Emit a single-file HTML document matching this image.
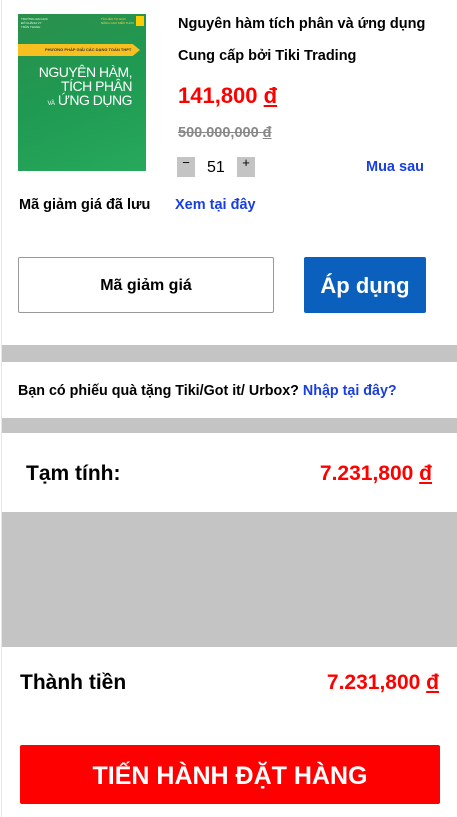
<!DOCTYPE html>
<html><head><meta charset="utf-8"><style>
*{margin:0;padding:0;box-sizing:border-box}
body{width:457px;height:817px;background:#fff;font-family:"Liberation Sans",sans-serif;position:relative;overflow:hidden;color:#000}
.a{position:absolute;white-space:nowrap}
.b{font-weight:bold}
</style></head><body>
<div class="a" style="left:1px;top:0;width:1px;height:817px;background:#e6e6e6"></div>
<div class="a" style="left:18px;top:14px;width:128px;height:157px;background:linear-gradient(160deg,#2a8f4c,#1f9a52 50%,#27a95c);overflow:hidden">
  <div class="a" style="left:3px;top:3px;font-size:3px;color:#dfe;line-height:4px">TRƯỜNG ĐẠI HỌC<br>ĐỖ KHÁNH VY<br>TRẦN THANH</div>
  <div class="a" style="left:83px;top:3px;font-size:3px;color:#ffd54a;line-height:4px">TÀI LIỆU TỰ HỌC<br>NÂNG CAO KIẾN THỨC</div>
  <div class="a" style="left:118px;top:2px;width:8px;height:10px;background:#ffcc00"></div>
  <div class="a" style="left:0;top:30px;width:122px;height:12px;background:#f7c020;clip-path:polygon(0 0,94% 0,100% 50%,94% 100%,0 100%)"></div>
  <div class="a" style="left:27px;top:33px;font-size:4px;font-weight:bold;color:#333">PHƯƠNG PHÁP GIẢI CÁC DẠNG TOÁN THPT</div>
  <div class="a" style="right:14px;top:51px;font-size:14px;line-height:14px;color:#fff;text-align:right;letter-spacing:-0.5px">NGUYÊN HÀM,<br>TÍCH PHÂN<br><span style="font-size:6px">VÀ</span> ỨNG DỤNG</div>
</div>
<div class="a b" style="left:178px;top:16px;font-size:14.5px">Nguyên hàm tích phân và ứng dụng</div>
<div class="a b" style="left:178px;top:48px;font-size:14.5px">Cung cấp bởi Tiki Trading</div>
<div class="a b" style="left:178px;top:83px;font-size:22px;color:#f00">141,800 <u>đ</u></div>
<div class="a b" style="left:178px;top:125px;font-size:14.5px;color:#888;text-decoration:line-through">500.000,000 <u>đ</u></div>
<div class="a" style="left:177px;top:157px;width:18px;height:20px;background:#c4c4c4;font-size:13px;text-align:center;line-height:12px">−</div>
<div class="a" style="left:207px;top:159px;font-size:16px">51</div>
<div class="a" style="left:237px;top:157px;width:18px;height:20px;background:#c4c4c4;font-size:13px;text-align:center;line-height:12px">+</div>
<div class="a b" style="left:366px;top:159px;font-size:14.5px;color:#1a3fe0">Mua sau</div>
<div class="a b" style="left:19px;top:197px;font-size:14.5px">Mã giảm giá đã lưu</div>
<div class="a b" style="left:175px;top:197px;font-size:14.5px;color:#1a3fe0">Xem tại đây</div>
<div class="a b" style="left:18px;top:257px;width:256px;height:56px;border:1px solid #999;border-radius:2px;font-size:16px;text-align:center;line-height:56px">Mã giảm giá</div>
<div class="a b" style="left:304px;top:257px;width:122px;height:56px;background:#0b5fbd;border-radius:2px;font-size:22px;color:#fff;text-align:center;line-height:58px">Áp dụng</div>
<div class="a" style="left:2px;top:345px;width:455px;height:17px;background:#c4c4c4"></div>
<div class="a b" style="left:18px;top:383px;font-size:14.3px">Bạn có phiếu quà tặng Tiki/Got it/ Urbox? <span style="color:#1a3fe0">Nhập tại đây?</span></div>
<div class="a" style="left:2px;top:418px;width:455px;height:15px;background:#c4c4c4"></div>
<div class="a b" style="left:26px;top:462px;font-size:21px">Tạm tính:</div>
<div class="a b" style="right:25px;top:462px;font-size:21px;color:#f00">7.231,800 <u>đ</u></div>
<div class="a" style="left:2px;top:512px;width:455px;height:135px;background:#c4c4c4"></div>
<div class="a b" style="left:20px;top:671px;font-size:21px">Thành tiền</div>
<div class="a b" style="right:18px;top:671px;font-size:21px;color:#f00">7.231,800 <u>đ</u></div>
<div class="a b" style="left:20px;top:745px;width:420px;height:59px;background:#f00;border-radius:2px;font-size:25px;color:#fff;text-align:center;line-height:62px">TIẾN HÀNH ĐẶT HÀNG</div>
</body></html>
